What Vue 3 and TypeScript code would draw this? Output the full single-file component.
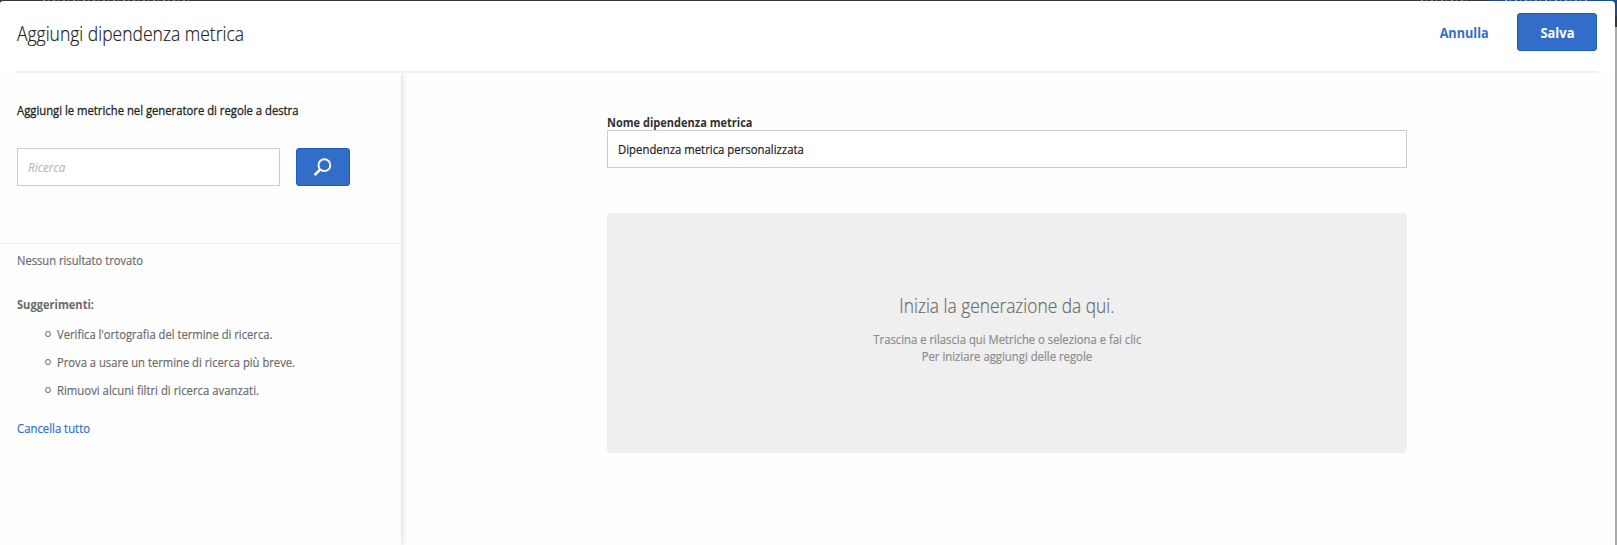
<script setup lang="ts">
import { ref, type Directive } from 'vue'

const query = ref('')
const name = ref('Dipendenza metrica personalizzata')
const tips = [
  { text: "Verifica l'ortografia del termine di ricerca.", width: 215.5 },
  { text: 'Prova a usare un termine di ricerca più breve.', width: 238 },
  { text: 'Rimuovi alcuni filtri di ricerca avanzati.', width: 202 },
]

// Condenses a line of text horizontally to the given width.
const vFit: Directive<HTMLElement, number> = {
  mounted(el, binding) {
    el.style.transform = `scaleX(${binding.value / el.getBoundingClientRect().width})`
  },
}
</script>

<template>
  <div class="page">
    <div class="backdrop-bar"><i class="marks left"></i><i class="marks mid"></i><i class="blue"></i><i class="marks right"></i></div>
    <div class="edge"><i class="edge-blue"></i><i class="edge-dark"></i></div>
    <div class="modal">
      <header>
        <h1><span v-fit="227">Aggiungi dipendenza metrica</span></h1>
        <div class="actions">
          <a class="cancel"><span v-fit="49">Annulla</span></a>
          <button class="save"><span v-fit="34">Salva</span></button>
        </div>
      </header>
      <main>
        <aside>
          <section class="search">
            <p class="intro"><span v-fit="281.5">Aggiungi le metriche nel generatore di regole a destra</span></p>
            <div class="row">
              <div class="field search-field"><input v-model="query" placeholder="Ricerca" /></div>
              <button class="go" aria-label="Ricerca">
                <svg width="20" height="20" viewBox="0 0 20 20">
                  <circle cx="11.4" cy="8.2" r="5.9" />
                  <path d="M7.1 12.6 L1.6 18.1" />
                </svg>
              </button>
            </div>
          </section>
          <section class="results">
            <p><span v-fit="126">Nessun risultato trovato</span></p>
            <p class="strong"><span v-fit="77">Suggerimenti:</span></p>
            <ul>
              <li v-for="tip in tips" :key="tip.text"><i></i><span v-fit="tip.width">{{ tip.text }}</span></li>
            </ul>
            <a class="clear"><span v-fit="73">Cancella tutto</span></a>
          </section>
        </aside>
        <section class="builder">
          <label><span v-fit="145.5">Nome dipendenza metrica</span></label>
          <div class="field name-field"><input v-model="name" /></div>
          <div class="drop">
            <h2><span v-fit="215">Inizia la generazione da qui.</span></h2>
            <p><span v-fit="268">Trascina e rilascia qui Metriche o seleziona e fai clic</span></p>
            <p><span v-fit="170.5">Per iniziare aggiungi delle regole</span></p>
          </div>
        </section>
      </main>
    </div>
  </div>
</template>

<style>
html, body { margin: 0; overflow: hidden; }
</style>

<style scoped>
* { box-sizing: border-box; }
.page {
  position: relative;
  width: 1617px;
  height: 545px;
  padding: 1px 2px 0 0;
  background: #aaa;
  overflow: hidden;
  font: 400 13px/20px "Open Sans", "Noto Sans", sans-serif;
  color: #323232;
  -webkit-text-stroke: 0.2px currentColor;
}
.backdrop-bar { position: absolute; inset: 0 0 auto 0; height: 6px; background: #363435; }
.backdrop-bar i { position: absolute; top: 0; height: 1px; }
.backdrop-bar .blue { right: 0; width: 127px; height: 6px; background: linear-gradient(90deg, #214a8c 107px, #173b76 107px 108px, #214a8c 108px); }
.marks { background: repeating-linear-gradient(90deg, #88888a 0 2px, #363435 2px 5px, #777 5px 6px, #363435 6px 10px); }
.marks.left { left: 43px; width: 148px; }
.marks.mid { left: 1421px; width: 50px; }
.backdrop-bar .marks.right { left: 1505px; width: 83px; background: repeating-linear-gradient(90deg, #8fa3c4 0 2px, #214a8c 2px 5px, #7c93ba 5px 6px, #214a8c 6px 10px); }
.edge { position: absolute; top: 0; right: 0; width: 6px; height: 27px; }
.edge i { display: block; }
.edge-blue { height: 16px; background: #214a8c; }
.edge-dark { height: 11px; background: #363435; }
.modal {
  position: relative;
  height: 544px;
  display: flex;
  flex-direction: column;
  background: #fff;
  border-radius: 3px 4px 0 0;
}
span { display: inline-block; white-space: nowrap; transform-origin: 0 50%; }
h1, h2, p, ul { margin: 0; padding: 0; font-weight: 400; }
header {
  display: flex;
  flex: none;
  justify-content: space-between;
  height: 72px;
  margin: 0 17px 0 16px;
  border-bottom: 2px solid #f1f1f1;
}
h1 { padding: 19px 0 0 1px; font-size: 19.5px; line-height: 28px; font-weight: 300; color: #222; }
.actions { display: flex; align-items: flex-start; gap: 21px; padding: 12px 1px 0 0; }
.cancel, .save { font-size: 14px; line-height: 36px; font-weight: 700; text-align: center; -webkit-text-stroke: 0; }
.cancel { width: 62px; padding: 2px 2px 0 0; color: #326ec8; }
.cancel span, .save span { transform-origin: 50% 50%; }
button { margin: 0; padding: 0; font: inherit; color: #fff; background: #326ec8; border: 1px solid #1d5bbd; border-radius: 3px; }
.save { width: 80px; height: 38px; padding-top: 1px; font-size: 14px; font-weight: 700; }
main { display: flex; flex: 1; background: #fefefe; }
aside { width: 401px; background: #fefefe; box-shadow: 1px 0 6px #d8d8d8; clip-path: inset(0 -8px 0 0); }
.search { height: 171px; padding: 27px 0 0 17px; border-bottom: 1px solid #f2f2f2; }
.intro { color: #222; -webkit-text-stroke-width: 0.3px; }
.row { display: flex; gap: 16px; margin-top: 28px; }
.field { height: 38px; padding: 0 10px; background: #fff; border: 1px solid #ccc; overflow: hidden; }
.field input {
  display: block;
  width: 114%;
  height: 36px;
  padding: 0;
  border: 0;
  outline: 0;
  background: transparent;
  font: inherit;
  color: #222;
  transform-origin: 0 50%;
}
.search-field { width: 263px; }
.search-field input { transform: scaleX(.9); }
.search-field input::placeholder { color: #bbb; font-style: italic; opacity: 1; }
.go { display: flex; align-items: center; justify-content: center; width: 54px; height: 38px; }
.go svg { fill: none; stroke: #fff; stroke-width: 1.9; }
.go path { stroke-width: 2.5; }
.results { padding: 6px 0 0 17px; color: #6b6b6b; }
.results .strong { margin-top: 24px; font-weight: 700; }
.strong, label { -webkit-text-stroke-width: 0; }
ul { margin-top: 4px; list-style: none; }
li { display: flex; align-items: center; height: 28px; padding: 4px 0 0 28px; }
li i { width: 6px; height: 6px; margin-right: 6px; border: 1px solid #6b6b6b; border-radius: 50%; }
.clear { display: block; margin-top: 16px; color: #326ec8; }
.builder { width: 1006px; padding: 39px 0 0 206px; }
label { display: block; height: 18px; font-weight: 700; color: #323232; }
.name-field input { transform: scaleX(.873); }
.drop {
  height: 240px;
  margin-top: 45px;
  padding-top: 79px;
  background: #efefef;
  border-radius: 4px;
  text-align: center;
  color: #8c8c8c;
}
.drop span { transform-origin: 50% 50%; }
h2 { margin-bottom: 11px; font-size: 19.5px; line-height: 28px; font-weight: 300; color: #6b6b6b; }
.drop p { line-height: 17px; }
</style>
